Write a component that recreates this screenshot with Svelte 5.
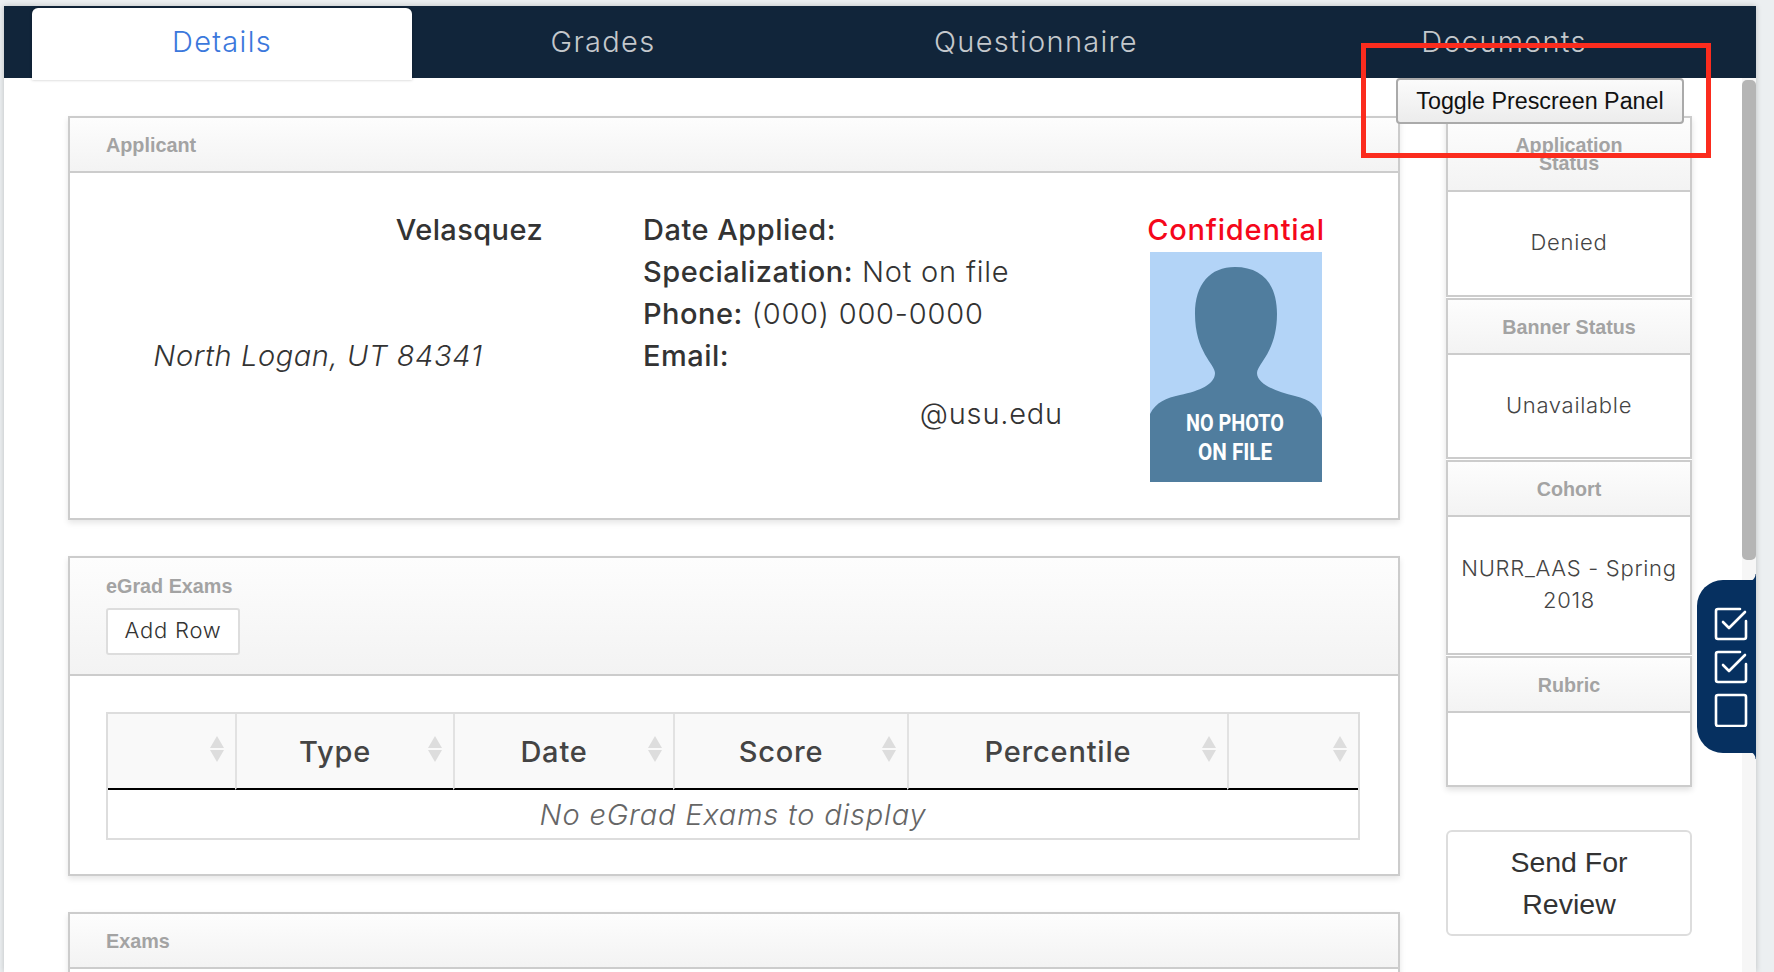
<script>
	const tabs = ['Details', 'Grades', 'Questionnaire', 'Documents'];
	const columns = ['', 'Type', 'Date', 'Score', 'Percentile', ''];
	const cards = [
		{ title: 'Application Status', value: 'Denied', cls: 'status' },
		{ title: 'Banner Status', value: 'Unavailable', cls: 'banner' },
		{ title: 'Cohort', value: 'NURR_AAS - Spring 2018', cls: 'cohort' },
		{ title: 'Rubric', value: '', cls: 'rubric' }
	];
</script>

<div class="page">
	<nav class="tabs">
		{#each tabs as tab, i}
			<div class="tab" class:active={i === 0}>{tab}</div>
		{/each}
	</nav>

	<div class="content">
		<main class="left">
			<section class="panel applicant">
				<header class="panel-head">Applicant</header>
				<div class="applicant-body">
					<div class="who">
						<div class="name">Velasquez</div>
						<div class="address">North Logan, UT 84341</div>
					</div>
					<div class="facts">
						<div><b>Date Applied:</b></div>
						<div><b>Specialization:</b> Not on file</div>
						<div><b>Phone:</b> (000) 000-0000</div>
						<div><b>Email:</b></div>
						<div class="email">@usu.edu</div>
					</div>
					<div class="photo-col">
						<div class="confidential">Confidential</div>
						<svg class="photo" viewBox="0 0 172 230" width="172" height="230">
							<rect width="172" height="230" fill="#b3d4f7" />
							<path
								fill="#507d9e"
								d="M0 162C6 150 16 146 30 143C50 139 65 132 65 121C65 112 45 100 45 62C45 32 60 15 85 15C112 15 127 32 127 62C127 100 107 112 107 121C107 132 125 139 145 144C160 148 168 153 172 166V230H0Z"
							/>
							<text x="85" y="179" textLength="98" lengthAdjust="spacingAndGlyphs">NO PHOTO</text>
							<text x="85" y="208" textLength="74" lengthAdjust="spacingAndGlyphs">ON FILE</text>
						</svg>
					</div>
				</div>
			</section>

			<section class="panel exams">
				<header class="panel-head egrad-head">
					<div>eGrad Exams</div>
					<button class="add">Add Row</button>
				</header>
				<div class="exams-body">
					<table>
						<thead>
							<tr>
								{#each columns as col}
									<th>
										{col}
										<span class="sort"></span>
									</th>
								{/each}
							</tr>
						</thead>
						<tbody>
							<tr><td colspan="6">No eGrad Exams to display</td></tr>
						</tbody>
					</table>
				</div>
			</section>

			<section class="panel exams-list">
				<header class="panel-head">Exams</header>
			</section>
		</main>

		<aside class="side">
			<div class="side-cards">
				{#each cards as card}
					<div class="card {card.cls}">
						<div class="card-head">{card.title}</div>
						<div class="card-body">{card.value}</div>
					</div>
				{/each}
			</div>
			<button class="send">Send For Review</button>
		</aside>

		<div class="scrollbar"><div class="thumb"></div></div>
	</div>

	<button class="toggle">Toggle Prescreen Panel</button>
	<div class="callout"></div>

	<div class="checklist">
		<svg viewBox="0 0 34 120" width="34" height="120" fill="none" stroke="#fff" stroke-width="2.6" stroke-linecap="round" stroke-linejoin="round">
			<path d="M26 2H4Q2 2 2 4V30Q2 32 4 32H30Q32 32 32 30V14" />
			<path d="M9 15L15 21L31 5" />
			<path d="M26 45H4Q2 45 2 47V73Q2 75 4 75H30Q32 75 32 73V57" />
			<path d="M9 58L15 64L31 48" />
			<rect x="2" y="88" width="30" height="31" rx="2" />
		</svg>
	</div>
</div>

<style>
	:global(body) {
		background: #eceff1;
		overflow: hidden;
	}
	.page {
		position: relative;
		height: 966px;
		margin: 6px 18px 0 4px;
		background: #fff;
		box-shadow: 0 0 6px rgba(0, 0, 0, 0.2);
		font-family: Inter, 'Liberation Sans', sans-serif;
		color: #333;
		letter-spacing: 0.8px;
		overflow: hidden;
	}
	.tabs {
		display: grid;
		grid-template-columns: 380px 382px 484px 452px;
		padding-left: 28px;
		height: 72px;
		background: #11253a;
		box-sizing: border-box;
	}
	.tab {
		height: 72px;
		box-sizing: border-box;
		padding-top: 18px;
		text-align: center;
		font-size: 29px;
		font-weight: 300;
		line-height: 36px;
		letter-spacing: 1.3px;
		color: #c4c8cc;
	}
	.tab.active {
		margin-top: 2px;
		padding-top: 16px;
		background: #fff;
		color: #3b78dc;
		border-radius: 6px 6px 0 0;
		box-shadow: 0 0 3px rgba(0, 0, 0, 0.25);
	}
	.content {
		position: relative;
		display: flex;
		height: 894px;
		box-sizing: border-box;
		padding: 38px 0 0 64px;
	}
	.left {
		width: 1332px;
		flex: none;
	}
	.panel {
		border: 2px solid #ccc;
		box-sizing: border-box;
		background: #fff;
		box-shadow: 0 3px 6px rgba(0, 0, 0, 0.1);
		margin-bottom: 36px;
	}
	.panel-head {
		height: 55px;
		box-sizing: border-box;
		padding: 15px 0 0 36px;
		border-bottom: 2px solid #ccc;
		background: linear-gradient(#fdfdfd, #f3f3f3);
		font: bold 19.8px/24px 'Liberation Sans', sans-serif;
		letter-spacing: 0;
		color: #a3a3a3;
	}
	.applicant {
		height: 404px;
	}
	.applicant-body {
		display: flex;
		padding-top: 36px;
		font-size: 29px;
		line-height: 42px;
	}
	.who {
		width: 496px;
		flex: none;
		text-align: center;
	}
	.name {
		text-align: right;
		padding-right: 23px;
		font-weight: 500;
		height: 126px;
		letter-spacing: 0.4px;
	}
	.address {
		font-style: italic;
		font-weight: 300;
		letter-spacing: 0.6px;
	}
	.facts {
		width: 420px;
		flex: none;
		margin-left: 77px;
		font-weight: 300;
	}
	.facts b {
		font-weight: 500;
		letter-spacing: 0.5px;
	}
	.email {
		margin-top: 16px;
		text-align: right;
	}
	.photo-col {
		width: 178px;
		margin-left: 84px;
		text-align: center;
		white-space: nowrap;
	}
	.confidential {
		color: #f5071b;
		font-weight: 500;
		margin: 0 -10px;
	}
	.photo {
		display: block;
		margin: 1px auto 0;
	}
	.photo text {
		fill: #fff;
		font: bold 24px Roboto, sans-serif;
		letter-spacing: 0;
		text-anchor: middle;
	}
	.exams {
		height: 320px;
	}
	.exams-list {
		height: 300px;
	}
	.egrad-head {
		height: 118px;
		padding-top: 16px;
	}
	.add {
		display: block;
		width: 134px;
		height: 47px;
		margin-top: 10px;
		padding: 0 0 3px;
		background: #fff;
		border: 2px solid #ddd;
		border-radius: 3px;
		font: 300 22px Inter, sans-serif;
		letter-spacing: 0.8px;
		color: #333;
	}
	.exams-body {
		padding: 36px 0 0 36px;
	}
	table {
		width: 1254px;
		table-layout: fixed;
		border-collapse: separate;
		border-spacing: 0;
		border: 2px solid #ddd;
	}
	th {
		position: relative;
		height: 74px;
		padding: 0 20px 0 0;
		background: #f9f9f9;
		border-left: 2px solid #e2e2e2;
		border-bottom: 2px solid #000;
		font-size: 29px;
		font-weight: 500;
		color: #444;
	}
	th:first-child {
		width: 107px;
		border-left: 0;
	}
	th:nth-child(2) {
		width: 196px;
	}
	th:nth-child(3) {
		width: 198px;
	}
	th:nth-child(4) {
		width: 212px;
	}
	th:nth-child(5) {
		width: 298px;
	}
	.sort {
		position: absolute;
		right: 11px;
		top: 22px;
		width: 14px;
		height: 26px;
	}
	.sort::before,
	.sort::after {
		content: '';
		position: absolute;
		left: 0;
		border-left: 7px solid transparent;
		border-right: 7px solid transparent;
	}
	.sort::before {
		top: 0;
		border-bottom: 12px solid #ddd;
	}
	.sort::after {
		bottom: 0;
		border-top: 12px solid #ddd;
	}
	td {
		height: 48px;
		padding: 0;
		text-align: center;
		font-size: 29px;
		font-style: italic;
		font-weight: 300;
		color: #666;
	}
	.side {
		width: 246px;
		flex: none;
		margin-left: 46px;
	}
	.side-cards {
		box-shadow: 0 3px 6px rgba(0, 0, 0, 0.12);
	}
	.card {
		border: 2px solid #ccc;
		box-sizing: border-box;
		margin-bottom: 1px;
		display: flex;
		flex-direction: column;
		text-align: center;
	}
	.card:last-child {
		margin-bottom: 0;
	}
	.card-head {
		display: flex;
		align-items: center;
		justify-content: center;
		flex: none;
		height: 55px;
		box-sizing: border-box;
		padding: 0 40px;
		border-bottom: 2px solid #ccc;
		background: linear-gradient(#fdfdfd, #f3f3f3);
		font: bold 19.7px/18px 'Liberation Sans', sans-serif;
		letter-spacing: 0;
		color: #a3a3a3;
	}
	.card-body {
		flex: 1;
		display: flex;
		align-items: center;
		justify-content: center;
		padding: 0 8px 3px;
		font-size: 22px;
		font-weight: 300;
		line-height: 32px;
		letter-spacing: 0.7px;
		color: #444;
	}
	.status {
		height: 181px;
	}
	.status .card-head {
		height: 74px;
	}
	.banner {
		height: 161px;
	}
	.cohort {
		height: 195px;
	}
	.rubric {
		height: 131px;
	}
	.send {
		display: block;
		width: 246px;
		height: 106px;
		margin-top: 43px;
		padding: 0 40px;
		background: #fff;
		border: 2px solid #ddd;
		border-radius: 6px;
		font: 28.5px/42px 'Liberation Sans', sans-serif;
		letter-spacing: 0;
		color: #333;
	}
	.scrollbar {
		position: absolute;
		top: 0;
		bottom: 0;
		right: 0;
		width: 14px;
		background: #f6f6f6;
	}
	.thumb {
		margin-top: 2px;
		height: 480px;
		background: #b5b5b5;
		border-radius: 5px;
	}
	.toggle {
		position: absolute;
		left: 1392px;
		top: 72px;
		width: 288px;
		height: 46px;
		padding: 0;
		background: linear-gradient(#fbfbfb, #ececec);
		border: 2px solid #aaa;
		border-radius: 4px;
		font: 23.3px 'Liberation Sans', sans-serif;
		letter-spacing: 0;
		color: #111;
	}
	.callout {
		position: absolute;
		left: 1357px;
		top: 37px;
		width: 350px;
		height: 115px;
		box-sizing: border-box;
		border: 5px solid #fb2c1e;
	}
	.checklist {
		position: absolute;
		left: 1693px;
		top: 574px;
		width: 59px;
		height: 173px;
		box-sizing: border-box;
		padding: 27px 0 0 17px;
		background: #063060;
		border-radius: 26px 0 0 26px;
	}
	.checklist::before,
	.checklist::after {
		content: '';
		position: absolute;
		right: 0;
		width: 8px;
		height: 6px;
	}
	.checklist::before {
		top: -6px;
		background: radial-gradient(circle at 0 0, transparent 7px, #063060 8px);
	}
	.checklist::after {
		bottom: -6px;
		background: radial-gradient(circle at 0 100%, transparent 7px, #063060 8px);
	}
	.checklist svg {
		display: block;
	}
</style>
